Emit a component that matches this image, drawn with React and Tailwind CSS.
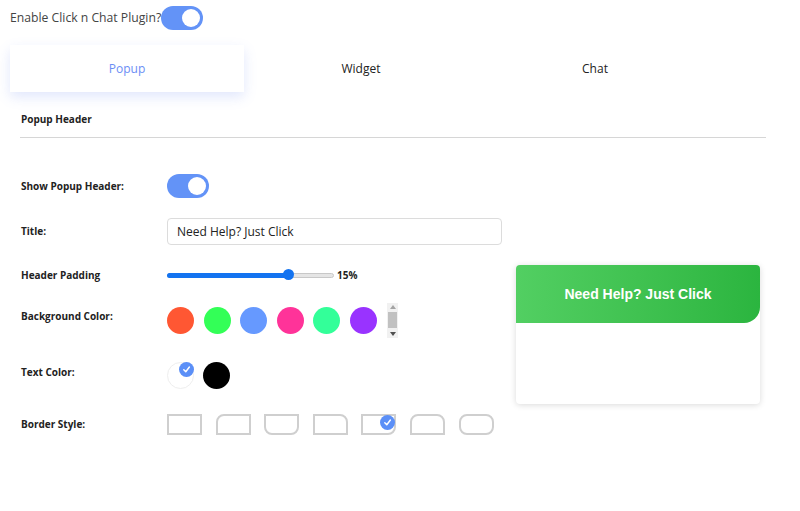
import React, { useState } from 'react';

const labelFont = { fontFamily: '"Open Sans", "DejaVu Sans", sans-serif' };

const Toggle = ({ on, onChange }) => (
  <button
    onClick={() => onChange(!on)}
    className={`relative w-[42px] h-[24px] rounded-full ${on ? 'bg-[#6393f7]' : 'bg-gray-300'}`}
  >
    <span
      className={`absolute top-[3px] w-[18px] h-[18px] rounded-full bg-white ${on ? 'left-[21px]' : 'left-[3px]'}`}
    />
  </button>
);

const Check = () => (
  <span className="absolute -top-[1px] -right-[1px] w-[15px] h-[15px] rounded-full bg-[#5b8ff7] flex items-center justify-center">
    <svg width="9" height="9" viewBox="0 0 10 10" fill="none">
      <path d="M2 5.2 L4.2 7.5 L8.2 2.2" stroke="white" strokeWidth="1.6" strokeLinecap="round" strokeLinejoin="round" />
    </svg>
  </span>
);

const bgColors = ['#ff5733', '#33ff57', '#6699ff', '#ff3399', '#33ff99', '#9933ff'];

// swatch shapes and the matching preview header shapes
const borderStyles = [
  'rounded-none',
  'rounded-tl-[8px]',
  'rounded-b-[8px]',
  'rounded-tr-[8px]',
  'rounded-br-[8px]',
  'rounded-t-[8px]',
  'rounded-[8px]',
];
const headerStyles = [
  'rounded-none',
  'rounded-tl-[16px]',
  'rounded-b-[16px]',
  'rounded-tr-[16px]',
  'rounded-br-[16px]',
  'rounded-t-[16px]',
  'rounded-[16px]',
];

const Row = ({ label, children, className = '' }) => (
  <div className={`flex items-center ${className}`}>
    <div className="w-[146px] text-[10px] font-bold text-[#222]" style={labelFont}>{label}</div>
    {children}
  </div>
);

const App = () => {
  const [enabled, setEnabled] = useState(true);
  const [showHeader, setShowHeader] = useState(true);
  const [tab, setTab] = useState('Popup');
  const [title, setTitle] = useState('Need Help? Just Click');
  const [textColor, setTextColor] = useState('white');
  const [border, setBorder] = useState(4);

  return (
    <div className="w-[800px] h-[511px] bg-white overflow-hidden text-[#333]" style={labelFont}>
      {/* top toggle */}
      <div className="flex items-center pl-[10px] pt-[6px]">
        <span className="text-[12.2px] text-[#444]">Enable Click n Chat Plugin?</span>
        <Toggle on={enabled} onChange={setEnabled} />
      </div>

      {/* tabs */}
      <div className="flex pl-[10px] mt-[15px]">
        {['Popup', 'Widget', 'Chat'].map(t => (
          <button
            key={t}
            onClick={() => setTab(t)}
            className={`w-[234px] h-[47px] text-[12px] ${tab === t ? 'text-[#6b8ef5] shadow-[0_5px_12px_rgba(90,120,240,0.18)] bg-white' : 'text-[#222]'}`}
          >
            {t}
          </button>
        ))}
      </div>

      {/* section header */}
      <div className="ml-[20px] w-[746px] mt-[20px] pb-[10px] border-b border-[#d6d6d6] text-[10px] font-bold text-[#222] pl-[1px]">
        Popup Header
      </div>

      <div className="flex pl-[21px] mt-[36px]">
        {/* settings */}
        <div className="flex flex-col w-[490px]">
          <Row label="Show Popup Header:" className="h-[24px]">
            <Toggle on={showHeader} onChange={setShowHeader} />
          </Row>

          <Row label="Title:" className="mt-[20px] h-[27px]">
            <input
              value={title}
              onChange={e => setTitle(e.target.value)}
              className="w-[335px] h-[27px] border border-[#dcdcdc] rounded-[4px] px-[9px] text-[12px] text-[#222] outline-none"
            />
          </Row>

          <Row label="Header Padding" className="mt-[18px] h-[24px]">
            <div className="flex items-center">
              <div className="relative w-[167px] h-[5px] rounded-full bg-[#e5e5e5] border border-[#c8c8c8]">
                <div className="absolute left-[-1px] top-[-1px] h-[5px] w-[121px] rounded-full bg-[#1373f0]" />
                <div className="absolute left-[115px] top-[-5px] w-[11px] h-[11px] rounded-full bg-[#1373f0]" />
              </div>
              <span className="ml-[3px] text-[10px] font-bold text-[#222]">15%</span>
            </div>
          </Row>

          <Row label="Background Color:" className="mt-[11px] h-[36px]">
            <div className="flex items-center gap-[9.5px] mt-[8px]">
              {bgColors.map(c => (
                <div key={c} className="w-[27px] h-[27px] rounded-full" style={{ backgroundColor: c }} />
              ))}
              <div className="ml-[1px] w-[11px] h-[35px] bg-[#f1f1f1] flex flex-col items-center justify-between py-[2px]">
                <svg width="6" height="4" viewBox="0 0 6 4"><path d="M0 4 L3 0 L6 4Z" fill="#a3a3a3" /></svg>
                <div className="w-[9px] h-[16px] bg-[#c1c1c1]" />
                <svg width="6" height="4" viewBox="0 0 6 4"><path d="M0 0 L3 4 L6 0Z" fill="#505050" /></svg>
              </div>
            </div>
          </Row>

          <Row label="Text Color:" className="mt-[24px] h-[28px]">
            <div className="flex items-center gap-[9px] mt-[6px]">
              <button onClick={() => setTextColor('white')} className="relative w-[27px] h-[27px] rounded-full bg-white border border-[#eee]">
                {textColor === 'white' && <Check />}
              </button>
              <button onClick={() => setTextColor('black')} className="relative w-[27px] h-[27px] rounded-full bg-black">
                {textColor === 'black' && <Check />}
              </button>
            </div>
          </Row>

          <Row label="Border Style:" className="mt-[28px] h-[21px]">
            <div className="flex items-center gap-[13.6px]">
              {borderStyles.map((b, i) => (
                <button
                  key={i}
                  onClick={() => setBorder(i)}
                  className={`relative w-[35px] h-[21px] border-2 border-[#cfcfcf] ${b}`}
                >
                  {border === i && <Check />}
                </button>
              ))}
            </div>
          </Row>
        </div>

        {/* preview */}
        <div className="mt-[91px] ml-[5px] w-[244px] h-[139px] bg-white rounded-[4px] shadow-[0_1px_6px_rgba(0,0,0,0.15)] overflow-hidden">
          {showHeader && (
            <div
              className={`h-[58px] flex items-center justify-center bg-gradient-to-r from-[#52cf62] to-[#2bb53f] ${headerStyles[border]}`}
            >
              <span
                className={`text-[14px] font-bold ${textColor === 'white' ? 'text-white' : 'text-black'}`}
                style={{ fontFamily: '"Liberation Sans", Arial, sans-serif' }}
              >
                {title}
              </span>
            </div>
          )}
        </div>
      </div>
    </div>
  );
};

export default App;
